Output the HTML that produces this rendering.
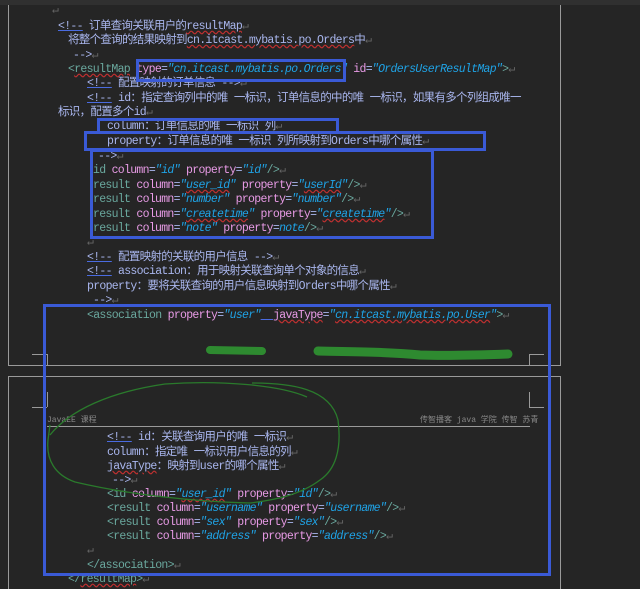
<!DOCTYPE html>
<html><head><meta charset="utf-8"><style>
body{margin:0;width:640px;height:589px;background:#252525;position:relative;overflow:hidden;font-family:"Liberation Mono","Noto Sans CJK SC",monospace;font-size:11.5px;letter-spacing:-0.7px}
.l{position:absolute;white-space:pre;color:#a9b6ee;line-height:14px}
.c{color:#a9b6ee}.t{color:#6aa89e}.a{color:#e89be6}.s{color:#1fa3e6;font-style:italic}.p{color:#666}
.u{text-decoration:underline;text-decoration-color:#4a6be0}
.w{text-decoration:underline wavy #c03030}
.b{position:absolute;border:3px solid #3a5ad6;box-sizing:border-box}
.g{position:absolute;background:#9a9a9a}
</style></head><body>
<div style="position:absolute;left:0;top:0;width:640px;height:5px;background:#303030"></div>
<div class="g" style="left:8px;top:5px;width:1px;height:361px"></div>
<div class="g" style="left:560px;top:5px;width:1px;height:361px"></div>
<div class="g" style="left:8px;top:365px;width:553px;height:1px"></div>
<div class="g" style="left:8px;top:376px;width:553px;height:1px"></div>
<div class="g" style="left:8px;top:376px;width:1px;height:213px"></div>
<div class="g" style="left:560px;top:376px;width:1px;height:213px"></div>
<div class="g" style="left:32px;top:354px;width:15px;height:1px"></div><div class="g" style="left:47px;top:354px;width:1px;height:12px"></div>
<div class="g" style="left:529px;top:354px;width:15px;height:1px"></div><div class="g" style="left:529px;top:354px;width:1px;height:12px"></div>
<div class="g" style="left:32px;top:407px;width:15px;height:1px"></div><div class="g" style="left:47px;top:392px;width:1px;height:15px"></div>
<div class="g" style="left:529px;top:407px;width:15px;height:1px"></div><div class="g" style="left:529px;top:392px;width:1px;height:15px"></div>
<div class="g" style="left:47px;top:426px;width:483px;height:1px"></div>

<div class="l p" style="left:52px;top:4px">↵</div>
<div class="l" style="left:58px;top:20px"><span class="u">&lt;!--</span> 订单查询关联用户的<span class="w">resultMap</span><span class="p">↵</span></div>
<div class="l" style="left:68px;top:34px">将整个查询的结果映射到<span class="w">cn.itcast.mybatis.po.Orders</span>中<span class="p">↵</span></div>
<div class="l" style="left:73px;top:49px">--&gt;<span class="p">↵</span></div>
<div class="l" style="left:68px;top:63px"><span class="t">&lt;<span class="w">resultMap</span> </span><span class="a">type</span>=<span class="s">"cn.itcast.mybatis.po.Orders"</span> <span class="a">id</span>=<span class="s">"OrdersUserResultMap"</span><span class="t">&gt;</span><span class="p">↵</span></div>
<div class="l" style="left:87px;top:77px"><span class="u">&lt;!--</span> 配置映射的订单信息 --&gt;<span class="p">↵</span></div>
<div class="l" style="left:87px;top:92px"><span class="u">&lt;!--</span> id：指定查询列中的唯 一标识，订单信息的中的唯 一标识，如果有多个列组成唯一</div>
<div class="l" style="left:58px;top:106px">标识，配置多个id<span class="p">↵</span></div>
<div class="l" style="left:107px;top:120px">column：订单信息的唯 一标识 列<span class="p">↵</span></div>
<div class="l" style="left:107px;top:135px">property：订单信息的唯 一标识 列所映射到Orders中哪个属性<span class="p">↵</span></div>
<div class="l" style="left:98px;top:150px">--&gt;<span class="p">↵</span></div>
<div class="l" style="left:93px;top:164px"><span class="t">id </span><span class="a">column</span>=<span class="s">"id"</span> <span class="a">property</span>=<span class="s">"id"</span><span class="t">/&gt;</span><span class="p">↵</span></div>
<div class="l" style="left:93px;top:179px"><span class="t">result </span><span class="a">column</span>=<span class="s">"<span class="w">user_id</span>"</span> <span class="a">property</span>=<span class="s">"<span class="w">userId</span>"</span><span class="t">/&gt;</span><span class="p">↵</span></div>
<div class="l" style="left:93px;top:193px"><span class="t">result </span><span class="a">column</span>=<span class="s">"number"</span> <span class="a">property</span>=<span class="s">"number"</span><span class="t">/&gt;</span><span class="p">↵</span></div>
<div class="l" style="left:93px;top:208px"><span class="t">result </span><span class="a">column</span>=<span class="s">"<span class="w">createtime</span>"</span> <span class="a">property</span>=<span class="s">"<span class="w">createtime</span>"</span><span class="t">/&gt;</span><span class="p">↵</span></div>
<div class="l" style="left:93px;top:222px"><span class="t">result </span><span class="a">column</span>=<span class="s">"note"</span> <span class="a">property</span>=<span class="s">note</span><span class="t">/&gt;</span><span class="p">↵</span></div>
<div class="l p" style="left:87px;top:236px">↵</div>
<div class="l" style="left:87px;top:251px"><span class="u">&lt;!--</span> 配置映射的关联的用户信息 --&gt;<span class="p">↵</span></div>
<div class="l" style="left:87px;top:265px"><span class="u">&lt;!--</span> association：用于映射关联查询单个对象的信息<span class="p">↵</span></div>
<div class="l" style="left:87px;top:280px">property：要将关联查询的用户信息映射到Orders中哪个属性<span class="p">↵</span></div>
<div class="l" style="left:93px;top:294px">--&gt;<span class="p">↵</span></div>
<div class="l" style="left:87px;top:309px"><span class="t">&lt;association </span><span class="a">property</span>=<span class="s">"user"</span><span class="u">  </span><span class="a"><span class="w">javaType</span></span>=<span class="s">"<span class="w">cn.itcast.mybatis.po.User</span>"</span><span class="t">&gt;</span><span class="p">↵</span></div>

<div class="l" style="left:47px;top:414px;font-size:8px;letter-spacing:0;color:#888">JavaEE 课程</div>
<div class="l" style="left:420px;top:414px;font-size:8px;letter-spacing:0;color:#888">传智播客 java 学院 传智 苏青</div>
<div class="l" style="left:107px;top:431px"><span class="u">&lt;!--</span> id：关联查询用户的唯 一标识<span class="p">↵</span></div>
<div class="l" style="left:107px;top:446px">column：指定唯 一标识用户信息的列<span class="p">↵</span></div>
<div class="l" style="left:107px;top:460px"><span class="w">javaType</span>：映射到user的哪个属性<span class="p">↵</span></div>
<div class="l" style="left:112px;top:474px">--&gt;<span class="p">↵</span></div>
<div class="l" style="left:107px;top:488px"><span class="t">&lt;id </span><span class="a">column</span>=<span class="s">"<span class="w">user_id</span>"</span> <span class="a">property</span>=<span class="s">"id"</span><span class="t">/&gt;</span><span class="p">↵</span></div>
<div class="l" style="left:107px;top:502px"><span class="t">&lt;result </span><span class="a">column</span>=<span class="s">"username"</span> <span class="a">property</span>=<span class="s">"username"</span><span class="t">/&gt;</span><span class="p">↵</span></div>
<div class="l" style="left:107px;top:516px"><span class="t">&lt;result </span><span class="a">column</span>=<span class="s">"sex"</span> <span class="a">property</span>=<span class="s">"sex"</span><span class="t">/&gt;</span><span class="p">↵</span></div>
<div class="l" style="left:107px;top:530px"><span class="t">&lt;result </span><span class="a">column</span>=<span class="s">"address"</span> <span class="a">property</span>=<span class="s">"address"</span><span class="t">/&gt;</span><span class="p">↵</span></div>
<div class="l p" style="left:87px;top:544px">↵</div>
<div class="l t" style="left:87px;top:559px">&lt;/association&gt;<span class="p">↵</span></div>
<div class="l t" style="left:68px;top:573px">&lt;/<span class="w">resultMap</span>&gt;<span class="p">↵</span></div>

<div class="b" style="left:136px;top:59px;width:210px;height:23px"></div>
<div class="b" style="left:97px;top:118px;width:242px;height:16px"></div>
<div class="b" style="left:84px;top:131px;width:402px;height:20px"></div>
<div class="b" style="left:90px;top:149px;width:344px;height:90px"></div>
<div class="b" style="left:43px;top:304px;width:508px;height:272px"></div>

<svg style="position:absolute;left:0;top:0" width="640" height="589">
<path d="M210,350 L262,351" stroke="#2e8a30" stroke-width="8" stroke-linecap="round" fill="none"/>
<path d="M318,351 C360,352 390,352 420,355 C450,356 480,355 508,354" stroke="#2e8a30" stroke-width="9" stroke-linecap="round" fill="none"/>
<path d="M50,435 C70,410 110,392 165,384 C220,380 280,385 307,397" stroke="#2a7a2c" stroke-width="1.3" fill="none"/>
<path d="M252,383 C290,383 330,388 338,420 C342,450 335,470 320,480 C300,495 275,500 250,503 C200,502 130,495 75,482 C55,475 46,460 48,440 L50,425" stroke="#2a7a2c" stroke-width="1.3" fill="none"/>
</svg>
</body></html>
